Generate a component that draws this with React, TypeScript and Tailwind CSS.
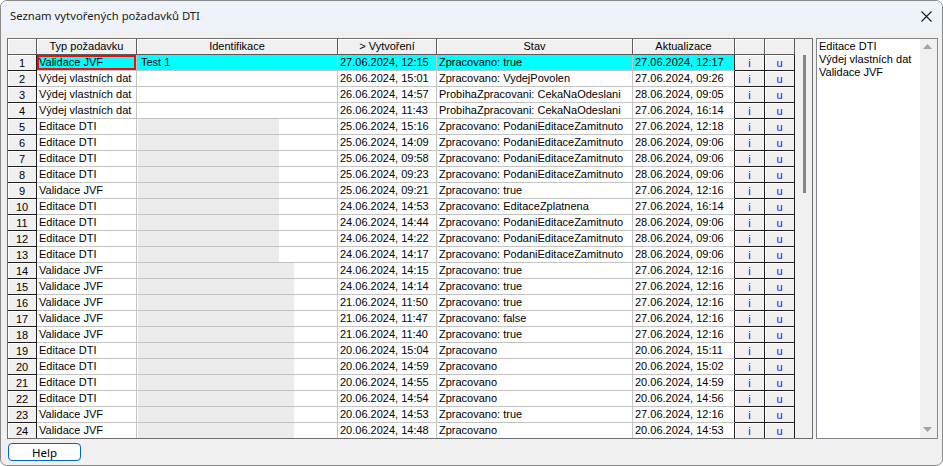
import React from "react";

type Row = {
  typ: string;
  ident?: string;
  gray?: number;
  vytv: string;
  stav: string;
  akt: string;
};

const rows: Row[] = [
  { typ: "Validace JVF", ident: "Test 1", vytv: "27.06.2024, 12:15", stav: "Zpracovano: true", akt: "27.06.2024, 12:17" },
  { typ: "Výdej vlastních dat", vytv: "26.06.2024, 15:01", stav: "Zpracovano: VydejPovolen", akt: "27.06.2024, 09:26" },
  { typ: "Výdej vlastních dat", vytv: "26.06.2024, 14:57", stav: "ProbihaZpracovani: CekaNaOdeslani", akt: "28.06.2024, 09:05" },
  { typ: "Výdej vlastních dat", vytv: "26.06.2024, 11:43", stav: "ProbihaZpracovani: CekaNaOdeslani", akt: "27.06.2024, 16:14" },
  { typ: "Editace DTI", gray: 141, vytv: "25.06.2024, 15:16", stav: "Zpracovano: PodaniEditaceZamitnuto", akt: "27.06.2024, 12:18" },
  { typ: "Editace DTI", gray: 141, vytv: "25.06.2024, 14:09", stav: "Zpracovano: PodaniEditaceZamitnuto", akt: "28.06.2024, 09:06" },
  { typ: "Editace DTI", gray: 141, vytv: "25.06.2024, 09:58", stav: "Zpracovano: PodaniEditaceZamitnuto", akt: "28.06.2024, 09:06" },
  { typ: "Editace DTI", gray: 141, vytv: "25.06.2024, 09:23", stav: "Zpracovano: PodaniEditaceZamitnuto", akt: "28.06.2024, 09:06" },
  { typ: "Validace JVF", gray: 141, vytv: "25.06.2024, 09:21", stav: "Zpracovano: true", akt: "27.06.2024, 12:16" },
  { typ: "Editace DTI", gray: 141, vytv: "24.06.2024, 14:53", stav: "Zpracovano: EditaceZplatnena", akt: "27.06.2024, 16:14" },
  { typ: "Editace DTI", gray: 141, vytv: "24.06.2024, 14:44", stav: "Zpracovano: PodaniEditaceZamitnuto", akt: "28.06.2024, 09:06" },
  { typ: "Editace DTI", gray: 141, vytv: "24.06.2024, 14:22", stav: "Zpracovano: PodaniEditaceZamitnuto", akt: "28.06.2024, 09:06" },
  { typ: "Editace DTI", gray: 141, vytv: "24.06.2024, 14:17", stav: "Zpracovano: PodaniEditaceZamitnuto", akt: "28.06.2024, 09:06" },
  { typ: "Validace JVF", gray: 156, vytv: "24.06.2024, 14:15", stav: "Zpracovano: true", akt: "27.06.2024, 12:16" },
  { typ: "Validace JVF", gray: 156, vytv: "24.06.2024, 14:14", stav: "Zpracovano: true", akt: "27.06.2024, 12:16" },
  { typ: "Validace JVF", gray: 156, vytv: "21.06.2024, 11:50", stav: "Zpracovano: true", akt: "27.06.2024, 12:16" },
  { typ: "Validace JVF", gray: 156, vytv: "21.06.2024, 11:47", stav: "Zpracovano: false", akt: "27.06.2024, 12:16" },
  { typ: "Validace JVF", gray: 156, vytv: "21.06.2024, 11:40", stav: "Zpracovano: true", akt: "27.06.2024, 12:16" },
  { typ: "Editace DTI", gray: 156, vytv: "20.06.2024, 15:04", stav: "Zpracovano", akt: "20.06.2024, 15:11" },
  { typ: "Editace DTI", gray: 156, vytv: "20.06.2024, 14:59", stav: "Zpracovano", akt: "20.06.2024, 15:02" },
  { typ: "Editace DTI", gray: 156, vytv: "20.06.2024, 14:55", stav: "Zpracovano", akt: "20.06.2024, 14:59" },
  { typ: "Editace DTI", gray: 156, vytv: "20.06.2024, 14:54", stav: "Zpracovano", akt: "20.06.2024, 14:56" },
  { typ: "Validace JVF", gray: 156, vytv: "20.06.2024, 14:53", stav: "Zpracovano: true", akt: "27.06.2024, 12:16" },
  { typ: "Validace JVF", gray: 156, vytv: "20.06.2024, 14:48", stav: "Zpracovano", akt: "20.06.2024, 14:53" },
];

function HeaderCell({ w, children }: { w: string; children?: React.ReactNode }) {
  return (
    <div
      className={`${w} shrink-0 h-[16px] bg-[#f0f0f0] border-r border-b border-[#5a5a5a] shadow-[inset_1px_1px_0_#ffffff] text-center leading-[15px] whitespace-nowrap overflow-hidden`}
    >
      {children}
    </div>
  );
}

function GridRow({ r, idx, last }: { r: Row; idx: number; last: boolean }) {
  const sel = idx === 0;
  const h = last ? "h-[15px] border-b-0" : "h-[16px] border-b";
  const dataBg = sel ? "bg-[#00ffff]" : "bg-white";
  const cell = `shrink-0 ${h} border-r border-[#c3c3c3] pl-[2px] leading-[15px] whitespace-nowrap overflow-hidden ${dataBg}`;
  return (
    <div className="flex">
      <div
        className={`w-[29px] shrink-0 ${h} bg-[#f0f0f0] border-r border-[#1e1e1e] shadow-[inset_1px_1px_0_#ffffff] text-center leading-[16px]`}
      >
        {idx + 1}
      </div>
      <div
        className={`w-[100px] ${cell} ${sel ? "shadow-[inset_0_0_0_2px_#e81010]" : ""}`}
      >
        {r.typ}
      </div>
      <div className={`w-[201px] ${cell} pl-0 relative`}>
        {r.ident ? <span className="pl-[2px]">{r.ident}</span> : null}
        {r.gray ? (
          r.gray === 141 ? (
            <div className="absolute left-[1px] top-0 h-[15px] w-[141px] bg-[#ebebeb]" />
          ) : (
            <div className="absolute left-[1px] top-0 h-[15px] w-[156px] bg-[#ebebeb]" />
          )
        ) : null}
      </div>
      <div className={`w-[99px] ${cell}`}>{r.vytv}</div>
      <div className={`w-[196px] ${cell}`}>{r.stav}</div>
      <div className={`w-[102px] ${cell} border-r-[#1e1e1e]`}>{r.akt}</div>
      <div
        className={`w-[30px] shrink-0 ${h} bg-[#f0f0f0] border-r border-[#1e1e1e] shadow-[inset_1px_1px_0_#ffffff] text-center leading-[16px] text-[#1515c8]`}
      >
        i
      </div>
      <div
        className={`w-[30px] shrink-0 ${h} bg-[#f0f0f0] border-r border-[#1e1e1e] shadow-[inset_1px_1px_0_#ffffff] text-center leading-[16px] text-[#1515c8]`}
      >
        u
      </div>
    </div>
  );
}

export default function App() {
  return (
    <div className="w-[943px] h-[466px] bg-white">
      <div className="w-[943px] h-[466px] flex flex-col border border-[#8a8a8a] rounded-[7px] overflow-hidden bg-[#f0f0f0]">
        {/* Title bar */}
        <div className="h-[30px] shrink-0 bg-[#eef3f9] flex items-center justify-between pl-[9px] pr-[10px]">
          <span className="font-['Noto_Sans',sans-serif] text-[11.3px] text-[#1b1b1b] pt-[1px]">
            Seznam vytvořených požadavků DTI
          </span>
          <svg width="11" height="11" viewBox="0 0 11 11" className="mt-[1px]">
            <path d="M0.5 0.5 L10.5 10.5 M10.5 0.5 L0.5 10.5" stroke="#1c1c1c" strokeWidth="1.1" />
          </svg>
        </div>

        {/* Body */}
        <div className="flex flex-col pl-[6px] pt-[7px] font-['Liberation_Sans',Arial,sans-serif] text-[11px] text-black">
          <div className="flex gap-[3px]">
            {/* Grid */}
            <div className="w-[806px] h-[401px] border border-[#6e6e6e] flex bg-white">
              <div className="flex flex-col w-[787px]">
                <div className="flex">
                  <HeaderCell w="w-[29px]" />
                  <HeaderCell w="w-[100px]">Typ požadavku</HeaderCell>
                  <HeaderCell w="w-[201px]">Identifikace</HeaderCell>
                  <HeaderCell w="w-[99px]">&gt; Vytvoření</HeaderCell>
                  <HeaderCell w="w-[196px]">Stav</HeaderCell>
                  <HeaderCell w="w-[102px]">Aktualizace</HeaderCell>
                  <HeaderCell w="w-[30px]" />
                  <HeaderCell w="w-[30px]" />
                </div>
                {rows.map((r, i) => (
                  <GridRow key={i} r={r} idx={i} last={i === rows.length - 1} />
                ))}
              </div>
              {/* vertical scroll area */}
              <div className="w-[17px] shrink-0 bg-[#f0f0f0] flex justify-center pt-[16px]">
                <div className="w-[3px] h-[138px] bg-[#858585] ml-[1px]" />
              </div>
            </div>

            {/* List box */}
            <div className="w-[122px] h-[401px] border border-[#828790] bg-white flex">
              <div className="flex-1 pl-[2px] pt-[1px] leading-[13px]">
                <div>Editace DTI</div>
                <div>Výdej vlastních dat</div>
                <div>Validace JVF</div>
              </div>
              <div className="w-[17px] shrink-0 bg-[#f0f0f0] flex flex-col items-center justify-between pt-[5px] pb-[6px] pr-[2px]">
                <svg width="9" height="5" viewBox="0 0 9 5">
                  <path d="M4.5 0 L9 5 L0 5 Z" fill="#a3a3a3" />
                </svg>
                <svg width="9" height="5" viewBox="0 0 9 5">
                  <path d="M0 0 L9 0 L4.5 5 Z" fill="#a3a3a3" />
                </svg>
              </div>
            </div>
          </div>

          {/* Help button */}
          <div className="pt-[4px] pl-[1px]">
            <button className="w-[73px] h-[18px] border border-[#0067c0] rounded-[4px] bg-[#fdfdfd] font-['Noto_Sans',sans-serif] text-[11.5px] leading-[15px] text-black flex items-center justify-center">
              Help
            </button>
          </div>
        </div>
      </div>
    </div>
  );
}
